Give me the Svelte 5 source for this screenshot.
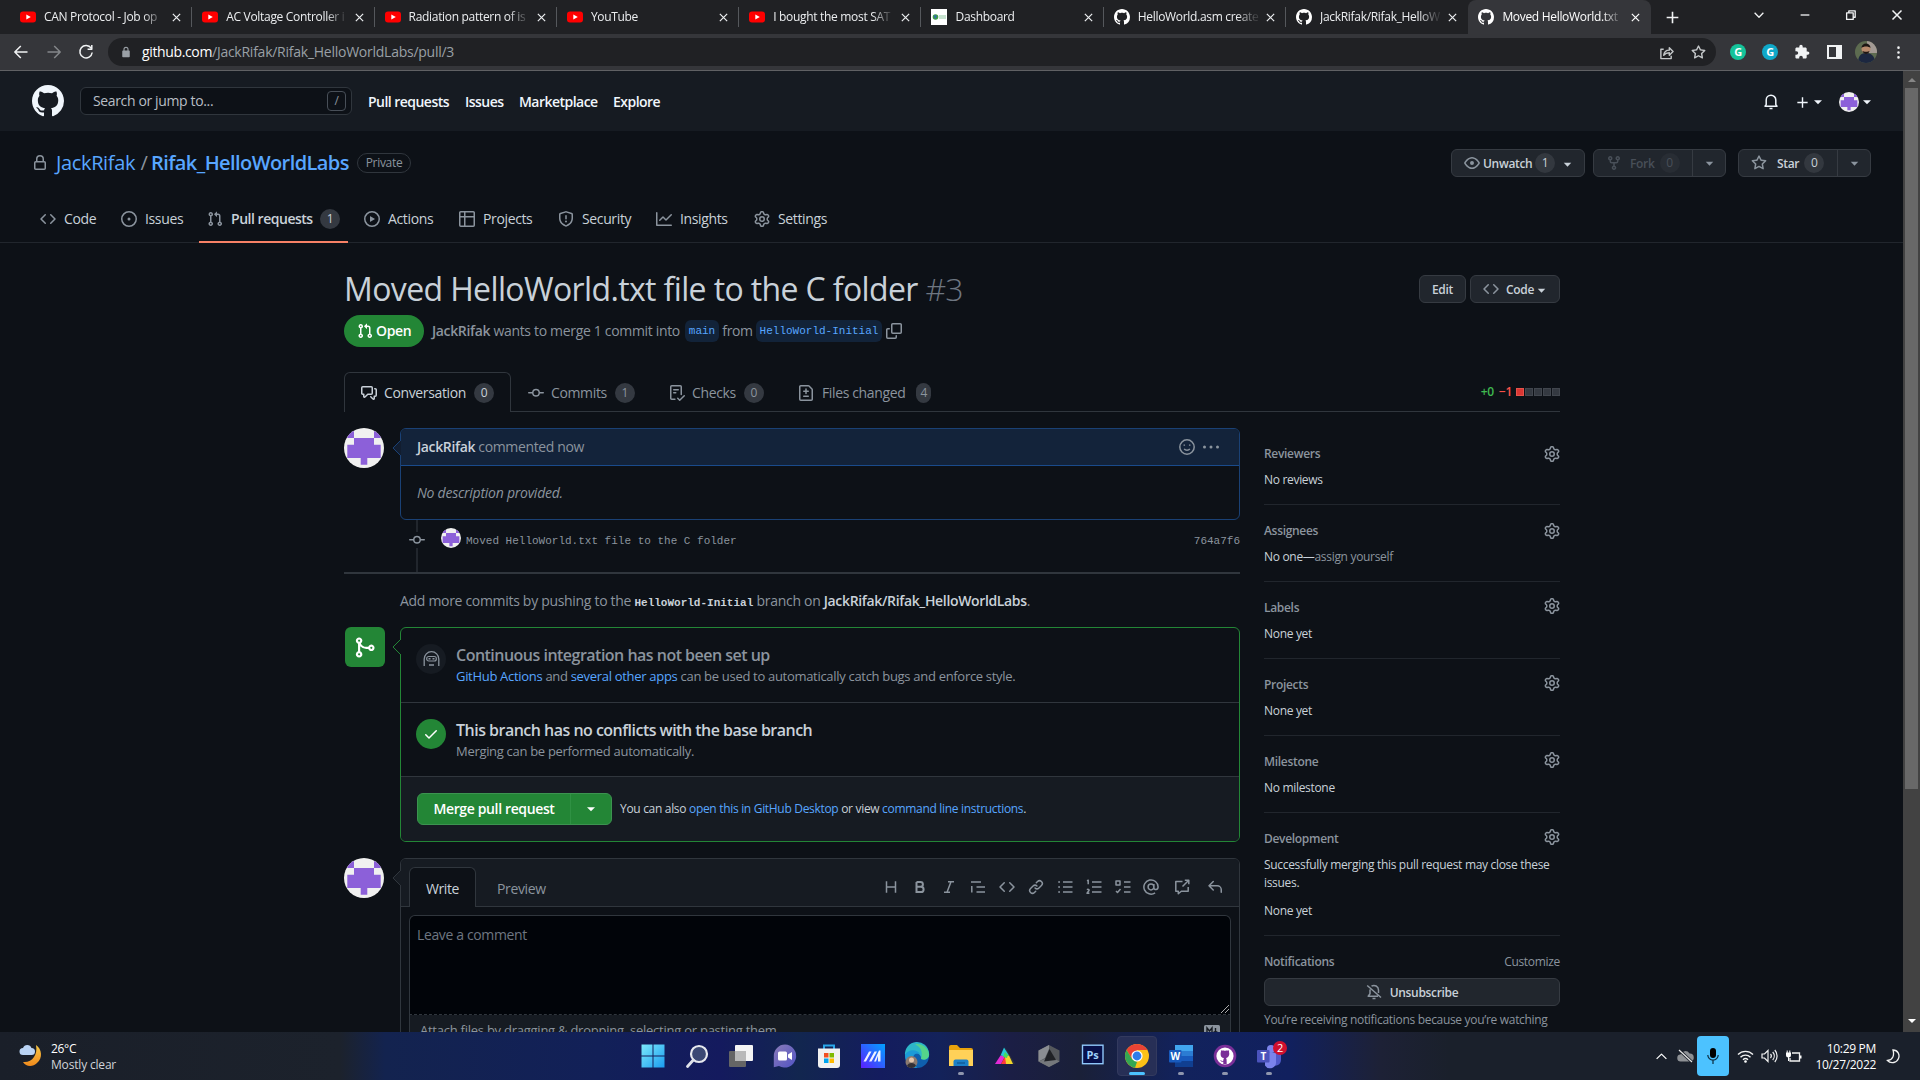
<script>
  const browserTabs = [
    { kind: 'yt', title: 'CAN Protocol - Job op' },
    { kind: 'yt', title: 'AC Voltage Controller i' },
    { kind: 'yt', title: 'Radiation pattern of is' },
    { kind: 'yt', title: 'YouTube' },
    { kind: 'yt', title: 'I bought the most SAT' },
    { kind: 'dash', title: 'Dashboard' },
    { kind: 'gh', title: 'HelloWorld.asm create' },
    { kind: 'gh', title: 'JackRifak/Rifak_HelloW' },
    { kind: 'gh', title: 'Moved HelloWorld.txt', active: true }
  ];
  const repoTabs = [
    { icon: 'code', label: 'Code' },
    { icon: 'issue', label: 'Issues' },
    { icon: 'pr', label: 'Pull requests', count: 1, active: true },
    { icon: 'play', label: 'Actions' },
    { icon: 'table', label: 'Projects' },
    { icon: 'shield', label: 'Security' },
    { icon: 'graph', label: 'Insights' },
    { icon: 'gear', label: 'Settings' }
  ];
  const prTabs = [
    { icon: 'discussion', label: 'Conversation', count: 0, active: true },
    { icon: 'commit', label: 'Commits', count: 1 },
    { icon: 'checklist', label: 'Checks', count: 0 },
    { icon: 'filediff', label: 'Files changed', count: 4 }
  ];
  const sections = [
    { title: 'Reviewers', text: 'No reviews', low: true },
    { title: 'Assignees', text: 'No one—', link: 'assign yourself', low: true },
    { title: 'Labels', text: 'None yet' },
    { title: 'Projects', text: 'None yet' },
    { title: 'Milestone', text: 'No milestone' }
  ];
  const tools = ['heading', 'bold', 'italic', 'quote', 'code', 'link', 'ul', 'ol', 'tasks', 'mention', 'crossref', 'reply'];
  const apps = [
    { id: 'start' }, { id: 'search' }, { id: 'views' }, { id: 'chat' }, { id: 'store' }, { id: 'asus' }, { id: 'edge' },
    { id: 'folder', open: true }, { id: 'prism' }, { id: 'cube' }, { id: 'ps' }, { id: 'chrome', focus: true },
    { id: 'word', open: true }, { id: 'github', open: true }, { id: 'teams', open: true }
  ];

  const fills = {
    github: 'M8 0C3.58 0 0 3.58 0 8c0 3.54 2.29 6.53 5.47 7.59.4.07.55-.17.55-.38 0-.19-.01-.82-.01-1.49-2.01.37-2.53-.49-2.69-.94-.09-.23-.48-.94-.82-1.13-.28-.15-.68-.52-.01-.53.63-.01 1.08.58 1.23.82.72 1.21 1.87.87 2.33.66.07-.52.28-.87.51-1.07-1.78-.2-3.64-.89-3.64-3.95 0-.87.31-1.59.82-2.15-.08-.2-.36-1.02.08-2.12 0 0 .67-.21 2.2.82.64-.18 1.32-.27 2-.27.68 0 1.36.09 2 .27 1.53-1.04 2.2-.82 2.2-.82.44 1.1.16 1.92.08 2.12.51.56.82 1.27.82 2.15 0 3.07-1.87 3.75-3.65 3.95.29.25.54.73.54 1.48 0 1.07-.01 1.93-.01 2.2 0 .21.15.46.55.38A8.013 8.013 0 0016 8c0-4.42-3.58-8-8-8z',
    code: 'M4.72 3.22a.75.75 0 011.06 1.06L2.06 8l3.72 3.72a.75.75 0 11-1.06 1.06L.47 8.53a.75.75 0 010-1.06l4.25-4.25zm6.56 0a.75.75 0 10-1.06 1.06L13.94 8l-3.72 3.72a.75.75 0 101.06 1.06l4.25-4.25a.75.75 0 000-1.06l-4.25-4.25z',
    issue: 'M8 9.5a1.5 1.5 0 100-3 1.5 1.5 0 000 3zM8 0a8 8 0 100 16A8 8 0 008 0zM1.5 8a6.5 6.5 0 1113 0 6.5 6.5 0 01-13 0z',
    pr: 'M7.177 3.073L9.573.677A.25.25 0 0110 .854v4.792a.25.25 0 01-.427.177L7.177 3.427a.25.25 0 010-.354zM3.75 2.5a.75.75 0 100 1.5.75.75 0 000-1.5zm-2.25.75a2.25 2.25 0 113 2.122v5.256a2.251 2.251 0 11-1.5 0V5.372A2.25 2.25 0 011.5 3.25zM11 2.5h-1V4h1a1 1 0 011 1v5.628a2.251 2.251 0 101.5 0V5A2.5 2.5 0 0011 2.5zm1 10.25a.75.75 0 111.5 0 .75.75 0 01-1.5 0zM3.75 12a.75.75 0 100 1.5.75.75 0 000-1.5z',
    play: 'M1.5 8a6.5 6.5 0 1113 0 6.5 6.5 0 01-13 0zM8 0a8 8 0 100 16A8 8 0 008 0zM6.379 5.227A.25.25 0 006 5.442v5.117a.25.25 0 00.379.214l4.264-2.559a.25.25 0 000-.428L6.379 5.227z',
    table: 'M0 1.75C0 .784.784 0 1.75 0h12.5C15.216 0 16 .784 16 1.75v12.5A1.75 1.75 0 0114.25 16H1.75A1.75 1.75 0 010 14.25V1.75zM1.5 6.5v7.75c0 .138.112.25.25.25H5v-8H1.5zM5 5H1.5V1.75a.25.25 0 01.25-.25H5V5zm1.5 1.5v8h7.75a.25.25 0 00.25-.25V6.5h-8zM14.5 5h-8V1.5h7.75a.25.25 0 01.25.25V5z',
    shield: 'M7.467.133a1.75 1.75 0 011.066 0l5.25 1.68A1.75 1.75 0 0115 3.48V7c0 1.566-.32 3.182-1.303 4.682-.983 1.498-2.585 2.813-5.032 3.855a1.7 1.7 0 01-1.33 0c-2.447-1.042-4.049-2.357-5.032-3.855C1.32 10.182 1 8.566 1 7V3.48a1.75 1.75 0 011.217-1.667l5.25-1.68zm.61 1.429a.25.25 0 00-.153 0l-5.25 1.68a.25.25 0 00-.174.238V7c0 1.358.275 2.666 1.057 3.86.784 1.194 2.121 2.34 4.366 3.297a.2.2 0 00.154 0c2.245-.956 3.582-2.104 4.366-3.298C13.225 9.666 13.5 8.36 13.5 7V3.48a.25.25 0 00-.174-.237l-5.25-1.68zM9 10.5a1 1 0 11-2 0 1 1 0 012 0zm-.25-5.75a.75.75 0 10-1.5 0v3a.75.75 0 001.5 0v-3z',
    graph: 'M1.5 1.75a.75.75 0 00-1.5 0v12.5c0 .414.336.75.75.75h14.5a.75.75 0 000-1.5H1.5V1.75zm14.28 2.53a.75.75 0 00-1.06-1.06L10 7.94 7.53 5.47a.75.75 0 00-1.06 0L3.22 8.72a.75.75 0 001.06 1.06L7 7.06l2.47 2.47a.75.75 0 001.06 0l5.25-5.25z',
    gear: 'M7.429 1.525a6.593 6.593 0 011.142 0c.036.003.108.036.137.146l.289 1.105c.147.56.55.967.997 1.189.174.086.341.183.501.29.417.278.97.423 1.53.27l1.102-.303c.11-.03.175.016.195.046.219.31.41.641.573.989.014.031.022.11-.059.19l-.815.806c-.411.406-.562.957-.53 1.456a4.588 4.588 0 010 .582c-.032.499.119 1.05.53 1.456l.815.806c.08.08.073.159.059.19a6.494 6.494 0 01-.573.99c-.02.029-.086.074-.195.045l-1.103-.303c-.559-.153-1.112-.008-1.529.27-.16.107-.327.204-.5.29-.449.222-.851.628-.998 1.189l-.289 1.105c-.029.11-.101.143-.137.146a6.613 6.613 0 01-1.142 0c-.036-.003-.108-.037-.137-.146l-.289-1.105c-.147-.56-.55-.967-.997-1.189a4.502 4.502 0 01-.501-.29c-.417-.278-.97-.423-1.53-.27l-1.102.303c-.11.03-.175-.016-.195-.046a6.492 6.492 0 01-.573-.989c-.014-.031-.022-.11.059-.19l.815-.806c.411-.406.562-.957.53-1.456a4.587 4.587 0 010-.582c.032-.499-.119-1.05-.53-1.456l-.815-.806c-.08-.08-.073-.159-.059-.19a6.44 6.44 0 01.573-.99c.02-.029.086-.075.195-.045l1.103.303c.559.153 1.112.008 1.529-.27.16-.107.327-.204.5-.29.449-.222.851-.628.998-1.189l.289-1.105c.029-.11.101-.143.137-.146zM8 0c-.236 0-.47.01-.701.03-.743.065-1.29.615-1.458 1.261l-.29 1.106c-.017.066-.078.158-.211.224a5.994 5.994 0 00-.668.386c-.123.082-.233.09-.3.071L3.27 2.776c-.644-.177-1.392.02-1.82.63a7.977 7.977 0 00-.704 1.217c-.315.675-.111 1.422.363 1.891l.815.806c.05.048.098.147.088.294a6.084 6.084 0 000 .772c.01.147-.038.246-.088.294l-.815.806c-.474.469-.678 1.216-.363 1.891.2.428.436.835.704 1.218.428.609 1.176.806 1.82.63l1.103-.303c.066-.019.176-.011.299.071.213.143.436.272.668.386.133.066.194.158.212.224l.289 1.106c.169.646.715 1.196 1.458 1.26a8.094 8.094 0 001.402 0c.743-.064 1.29-.614 1.458-1.26l.29-1.106c.017-.066.078-.158.211-.224a5.98 5.98 0 00.668-.386c.123-.082.233-.09.3-.071l1.102.302c.644.177 1.392-.02 1.82-.63.268-.382.505-.789.704-1.217.315-.675.111-1.422-.364-1.891l-.814-.806c-.05-.048-.098-.147-.088-.294a6.1 6.1 0 000-.772c-.01-.147.039-.246.088-.294l.814-.806c.475-.469.679-1.216.364-1.891a7.992 7.992 0 00-.704-1.218c-.428-.609-1.176-.806-1.82-.63l-1.103.303c-.066.019-.176.011-.299-.071a5.991 5.991 0 00-.668-.386c-.133-.066-.194-.158-.212-.224L10.16 1.29C9.99.645 9.444.095 8.701.031A8.094 8.094 0 008 0zm1.5 8a1.5 1.5 0 11-3 0 1.5 1.5 0 013 0zM11 8a3 3 0 11-6 0 3 3 0 016 0z',
    lock: 'M4 4v2h-.25A1.75 1.75 0 002 7.75v5.5c0 .966.784 1.75 1.75 1.75h8.5A1.75 1.75 0 0014 13.25v-5.5A1.75 1.75 0 0012.25 6H12V4a4 4 0 10-8 0zm6.5 2V4a2.5 2.5 0 10-5 0v2h5zM12 7.5h.25a.25.25 0 01.25.25v5.5a.25.25 0 01-.25.25h-8.5a.25.25 0 01-.25-.25v-5.5a.25.25 0 01.25-.25H12z',
    eye: 'M1.679 7.932c.412-.621 1.242-1.75 2.366-2.717C5.175 4.242 6.527 3.5 8 3.5c1.473 0 2.824.742 3.955 1.715 1.124.967 1.954 2.096 2.366 2.717a.119.119 0 010 .136c-.412.621-1.242 1.75-2.366 2.717C10.825 11.758 9.473 12.5 8 12.5c-1.473 0-2.824-.742-3.955-1.715C2.92 9.818 2.09 8.69 1.679 8.068a.119.119 0 010-.136zM8 2c-1.981 0-3.67.992-4.933 2.078C1.797 5.169.88 6.423.43 7.1a1.619 1.619 0 000 1.798c.45.678 1.367 1.932 2.637 3.024C4.329 13.008 6.019 14 8 14c1.981 0 3.67-.992 4.933-2.078 1.27-1.091 2.187-2.345 2.637-3.023a1.619 1.619 0 000-1.798c-.45-.678-1.367-1.932-2.637-3.023C11.671 2.992 9.981 2 8 2zm0 8a2 2 0 100-4 2 2 0 000 4z',
    fork: 'M5 3.25a.75.75 0 11-1.5 0 .75.75 0 011.5 0zm0 2.122a2.25 2.25 0 10-1.5 0v.878A2.25 2.25 0 005.75 8.5h1.5v2.128a2.251 2.251 0 101.5 0V8.5h1.5a2.25 2.25 0 002.25-2.25v-.878a2.25 2.25 0 10-1.5 0v.878a.75.75 0 01-.75.75h-4.5A.75.75 0 015 6.25v-.878zm3.75 7.378a.75.75 0 11-1.5 0 .75.75 0 011.5 0zm3-8.75a.75.75 0 100-1.5.75.75 0 000 1.5z',
    star: 'M8 .25a.75.75 0 01.673.418l1.882 3.815 4.21.612a.75.75 0 01.416 1.279l-3.046 2.97.719 4.192a.75.75 0 01-1.088.791L8 12.347l-3.766 1.98a.75.75 0 01-1.088-.79l.72-4.194L.818 6.374a.75.75 0 01.416-1.28l4.21-.611L7.327.668A.75.75 0 018 .25zm0 2.445L6.615 5.5a.75.75 0 01-.564.41l-3.097.45 2.24 2.184a.75.75 0 01.216.664l-.528 3.084 2.769-1.456a.75.75 0 01.698 0l2.77 1.456-.53-3.084a.75.75 0 01.216-.664l2.24-2.183-3.096-.45a.75.75 0 01-.564-.41L8 2.694v.001z',
    copy: 'M0 6.75C0 5.784.784 5 1.75 5h1.5a.75.75 0 010 1.5h-1.5a.25.25 0 00-.25.25v7.5c0 .138.112.25.25.25h7.5a.25.25 0 00.25-.25v-1.5a.75.75 0 011.5 0v1.5A1.75 1.75 0 019.25 16h-7.5A1.75 1.75 0 010 14.25v-7.5zM5 1.75C5 .784 5.784 0 6.75 0h7.5C15.216 0 16 .784 16 1.75v7.5A1.75 1.75 0 0114.25 11h-7.5A1.75 1.75 0 015 9.25v-7.5zm1.75-.25a.25.25 0 00-.25.25v7.5c0 .138.112.25.25.25h7.5a.25.25 0 00.25-.25v-7.5a.25.25 0 00-.25-.25h-7.5z',
    discussion: 'M1.5 2.75a.25.25 0 01.25-.25h8.5a.25.25 0 01.25.25v5.5a.25.25 0 01-.25.25h-3.5a.75.75 0 00-.53.22L3.5 11.44V9.25a.75.75 0 00-.75-.75h-1a.25.25 0 01-.25-.25v-5.5zM1.75 1A1.75 1.75 0 000 2.75v5.5C0 9.216.784 10 1.75 10H2v1.543a1.457 1.457 0 002.487 1.03L7.061 10h3.189A1.75 1.75 0 0012 8.25v-5.5A1.75 1.75 0 0010.25 1h-8.5zM14.5 4.75a.25.25 0 00-.25-.25h-.5a.75.75 0 110-1.5h.5c.966 0 1.75.784 1.75 1.75v5.5A1.75 1.75 0 0114.25 12H14v1.543a1.457 1.457 0 01-2.487 1.03L9.22 12.28a.75.75 0 111.06-1.06l2.22 2.22v-2.19a.75.75 0 01.75-.75h1a.25.25 0 00.25-.25v-5.5z',
    commit: 'M10.5 7.75a2.5 2.5 0 11-5 0 2.5 2.5 0 015 0zm1.43.75a4.002 4.002 0 01-7.86 0H.75a.75.75 0 110-1.5h3.32a4.001 4.001 0 017.86 0h3.32a.75.75 0 110 1.5h-3.32z',
    checklist: 'M2.5 1.75a.25.25 0 01.25-.25h8.5a.25.25 0 01.25.25v7.736a.75.75 0 101.5 0V1.75A1.75 1.75 0 0011.25 0h-8.5A1.75 1.75 0 001 1.75v11.5c0 .966.784 1.75 1.75 1.75h3.17a.75.75 0 000-1.5H2.75a.25.25 0 01-.25-.25V1.75zM4.75 4a.75.75 0 000 1.5h4.5a.75.75 0 000-1.5h-4.5zM4 7.75A.75.75 0 014.75 7h2a.75.75 0 010 1.5h-2A.75.75 0 014 7.75zm11.774 3.537a.75.75 0 00-1.048-1.074L10.7 14.145 9.281 12.72a.75.75 0 00-1.062 1.058l1.943 1.95a.75.75 0 001.055.008l4.557-4.45z',
    filediff: 'M2.75 1.5a.25.25 0 00-.25.25v12.5c0 .138.112.25.25.25h10.5a.25.25 0 00.25-.25V4.664a.25.25 0 00-.073-.177l-2.914-2.914a.25.25 0 00-.177-.073H2.75zM1 1.75C1 .784 1.784 0 2.75 0h7.586c.464 0 .909.184 1.237.513l2.914 2.914c.329.328.513.773.513 1.237v9.586A1.75 1.75 0 0113.25 16H2.75A1.75 1.75 0 011 14.25V1.75zm7 1.5a.75.75 0 01.75.75v1.5h1.5a.75.75 0 010 1.5h-1.5v1.5a.75.75 0 01-1.5 0V7h-1.5a.75.75 0 010-1.5h1.5V4A.75.75 0 018 3.25zm-3 8a.75.75 0 01.75-.75h4.5a.75.75 0 010 1.5h-4.5a.75.75 0 01-.75-.75z',
    merge: 'M5 3.254V3.25v.005a.75.75 0 110-.005v.004zm.45 1.9a2.25 2.25 0 10-1.95.218v5.256a2.25 2.25 0 101.5 0V7.123A5.735 5.735 0 009.25 9h1.378a2.251 2.251 0 100-1.5H9.25a4.25 4.25 0 01-3.8-2.346zM12.75 9a.75.75 0 100-1.5.75.75 0 000 1.5zm-8.5 4.5a.75.75 0 100-1.5.75.75 0 000 1.5z',
    check: 'M13.78 4.22a.75.75 0 010 1.06l-7.25 7.25a.75.75 0 01-1.06 0L2.22 9.28a.75.75 0 011.06-1.06L6 10.94l6.72-6.72a.75.75 0 011.06 0z',
    link: 'M7.775 3.275a.75.75 0 001.06 1.06l1.25-1.25a2 2 0 112.83 2.83l-2.5 2.5a2 2 0 01-2.83 0 .75.75 0 00-1.06 1.06 3.5 3.5 0 004.95 0l2.5-2.5a3.5 3.5 0 00-4.95-4.95l-1.25 1.25zm-4.69 9.64a2 2 0 010-2.83l2.5-2.5a2 2 0 012.83 0 .75.75 0 001.06-1.06 3.5 3.5 0 00-4.95 0l-2.5 2.5a3.5 3.5 0 004.95 4.95l1.25-1.25a.75.75 0 00-1.06-1.06l-1.25 1.25a2 2 0 01-2.83 0z',
    reply: 'M6.78 1.97a.75.75 0 010 1.06L3.81 6h6.44A4.75 4.75 0 0115 10.75v2.5a.75.75 0 01-1.5 0v-2.5a3.25 3.25 0 00-3.25-3.25H3.81l2.97 2.97a.75.75 0 11-1.06 1.06L1.47 7.28a.75.75 0 010-1.06l4.25-4.25a.75.75 0 011.06 0z',
    caret: 'M4 6.2h8L8 10.300z',
    kebab: 'M8 3.6a1.6 1.6 0 100-3.2 1.6 1.6 0 000 3.2zm0 6a1.6 1.6 0 100-3.2 1.6 1.6 0 000 3.2zm0 6a1.6 1.6 0 100-3.2 1.6 1.6 0 000 3.2z',
    dots: 'M1.500 9.5a1.5 1.5 0 100-3 1.5 1.5 0 000 3zm6.500 0a1.5 1.5 0 100-3 1.5 1.5 0 000 3zm6.500 0a1.5 1.5 0 100-3 1.5 1.5 0 000 3z',
    padlock: 'M8 1a3.4 3.4 0 00-3.4 3.4V6H4a1 1 0 00-1 1v7a1 1 0 001 1h8a1 1 0 001-1V7a1 1 0 00-1-1h-.6V4.400A3.400 3.400 0 008 1zm0 1.500a1.900 1.900 0 011.900 1.900V6H6.100V4.400A1.900 1.900 0 018 2.500z',
    puzzle: 'M13.700 7.400h-1V4.700c0-.7-.6-1.300-1.300-1.300H8.700v-1a1.700 1.700 0 00-3.400 0v1H2.700c-.7 0-1.300.6-1.300 1.300v2.500h1a1.800 1.800 0 010 3.600h-1v2.500c0 .7.6 1.300 1.300 1.300h2.500v-1a1.800 1.800 0 013.600 0v1h2.600c.7 0 1.300-.6 1.300-1.300v-2.500h1a1.700 1.700 0 000-3.400z'
  };
  const strokes = {
    bell: 'M3.2 10.600L2 12.200h12l-1.200-1.600V6a4.800 4.800 0 00-9.600 0zM6.500 14.600h3',
    bellslash: 'M4 5.500V9.800L2.200 12.200H12M5.500 2.200a4.500 4.500 0 017 3.800v3M1.200 1.500l13.800 12M6.500 14.600h3',
    plus: 'M8 2.500v11M2.500 8h11',
    smiley: 'M8 .8a7.200 7.200 0 100 14.400A7.200 7.200 0 008 .8zM5.200 9.800c1.200 1.800 4.400 1.800 5.600 0M5.300 5.500v1.300M10.700 5.500v1.300',
    heading: 'M3.500 2.200v11.600M12.500 2.200v11.600M3.500 8h9',
    italic: 'M7 2.700h6M3 13.300h6M10 2.700L6 13.300',
    quote: 'M1 3h10M6.500 8h8.500M6.500 13h8.500M1.800 7v6.500',
    ul: 'M6 3h9.500M6 8h9.500M6 13h9.500M1.200 3h1.800M1.200 8h1.800M1.200 13h1.800',
    ol: 'M6 3h9.500M6 8h9.500M6 13h9.500M1 1.800l1.200-.6v4M1 10.800c.8-.8 2.400-.4 2 .7L1 14.200h2.400',
    tasks: 'M1 2h4v4H1zM9 3h6.500M9 8h6.500M9 13h6.500M1 12l1.500 1.500L5.500 10',
    mention: 'M10.900 8a2.900 2.900 0 11-5.800 0 2.900 2.900 0 015.800 0zM10.900 5v3.700c0 2.500 4.200 2.400 4.200-.7a7.100 7.100 0 10-3 5.800',
    crossref: 'M8.500 2.500H1.800v9.700h2.500v2.600l3-2.600h6.900V8M8.500 7.500l6-6M10.800 1.200h4v4',
    back: 'M14.500 8H2M7.800 2L1.800 8l6 6',
    forward: 'M1.500 8H14M8.200 2l6 6-6 6',
    reload: 'M13.200 4.200A6.200 6.200 0 1014.200 8.500M13.800 1v4.200H9.600',
    close: 'M3.500 3.500l9 9M12.500 3.500l-9 9',
    chevdown: 'M3 5.500l5 5 5-5',
    chevup: 'M2 11l6-6 6 6',
    min: 'M3 8h10',
    restore: 'M3 5.500h7.500V13H3zM5.500 5.500V3.300h7.300v7.300h-2.300',
    share: 'M5 4.500H2v10h11v-3M5 11c.5-4 3-5.500 6-5.500V3l4 4-4 4V8.300c-2.500 0-4.500.8-6 2.700z'
  };
</script>

{#snippet icon(name, size = 16)}
  <svg class="icon" width={size} height={size} viewBox="0 0 16 16">
    {#if fills[name]}
      <path fill="currentColor" fill-rule="evenodd" d={fills[name]} />
    {:else if name === 'bold'}
      <path fill="none" stroke="currentColor" stroke-width="2" d="M4.500 3v10h4.500a2.600 2.600 0 000-5.200H4.500M4.500 3h4a2.400 2.400 0 010 4.800" />
    {:else}
      <path fill="none" stroke="currentColor" stroke-width="1.5" stroke-linejoin="round" d={strokes[name]} />
    {/if}
  </svg>
{/snippet}

{#snippet identicon(size)}
  <svg class="identicon" width={size} height={size} viewBox="0 0 40 40">
    <rect width="40" height="40" fill="#f0f0f0" />
    <path fill="#8c60d9" d="M3.300 3.300h6.700v6.700H3.300zM30 3.300h6.700v6.700H30zM10 10h20v6.700h6.700V30H23.300v6.700h-6.600V30H3.300V16.700H10z" />
  </svg>
{/snippet}

{#snippet app(id)}
  <svg class="appicon" width="24" height="24" viewBox="0 0 24 24">
    {#if id === 'start'}
      <path fill="url(#win)" d="M.5.500h11v11H.5zM12.500.500h11v11h-11zM.5 12.500h11v11H.5zM12.500 12.500h11v11h-11z" />
    {:else if id === 'search'}
      <circle cx="14" cy="10" r="8" fill="#3b4874" stroke="#e6e8ee" stroke-width="2.200" /><path d="M8.300 16L2.500 22.500" stroke="#dfe2ea" stroke-width="2.800" stroke-linecap="round" />
    {:else if id === 'views'}
      <rect x="6" y="1" width="18" height="16" rx="1" fill="#f4f4f4" /><rect x="0" y="7" width="17" height="16" rx="1" fill="#656565" /><path d="M6 7h11v10H6z" fill="#b9b9b9" />
    {:else if id === 'chat'}
      <path d="M12 .5A11.500 11.500 0 11 6 22L.8 23.300V12A11.300 11.300 0 0112 .5z" fill="url(#chatg)" /><rect x="5" y="7.500" width="9" height="9" rx="1.500" fill="#fff" /><path d="M15 10.500l4-2.500v8l-4-2.500z" fill="#fff" />
    {:else if id === 'store'}
      <path d="M7 5V1.500h10V5" fill="none" stroke="#2aa7ea" stroke-width="2" /><path d="M1 4.500h22V21a3 3 0 01-3 3H4a3 3 0 01-3-3z" fill="#f1f1f1" /><path d="M7 9h4.500v4.500H7z" fill="#f25022" /><path d="M12.500 9H17v4.500h-4.500z" fill="#7fba00" /><path d="M7 14.500h4.500V19H7z" fill="#00a4ef" /><path d="M12.500 14.500H17V19h-4.500z" fill="#ffb900" />
    {:else if id === 'asus'}
      <rect width="24" height="24" fill="url(#asusg)" /><path d="M2.500 17.500L8 7.500h2.500L5 17.500zM8 17.500l5.500-10H16l-5.500 10zM13 17.500l5-11h1.500v11H17v-5.500l-2 5.500z" fill="#fff" opacity=".92" />
    {:else if id === 'edge'}
      <circle cx="12" cy="12" r="12" fill="#0f5fae" /><path d="M0 11A12 12 0 0124 9c1 5-3 8-8 6 1-4-5-10-16-4z" fill="#2db6c8" /><path d="M10 .2A12 12 0 0124 10.500c0 4-4 6-8 4.500C18 8 16 3 10 .2z" fill="#55d48a" /><path d="M0 11C3 5 12 5 15 10c-5-2-8 2-7 7l4 7C5 24 0 19 0 11z" fill="#1c9bd8" /><circle cx="6.500" cy="18" r="6" fill="#8b7a70" /><circle cx="6.500" cy="16" r="2.500" fill="#e3c5ab" /><path d="M2 22c1-4 8-4 9 0a6 6 0 01-9 0z" fill="#332f35" />
    {:else if id === 'folder'}
      <path d="M0 3a2 2 0 012-2h6l3 3h11a2 2 0 012 2v4H0z" fill="#e8a20c" /><path d="M0 6h24v16H0z" fill="#ffd158" /><path d="M4.500 22v-4.500a2 2 0 012-2h11a2 2 0 012 2V22z" fill="#1c7fc8" /><path d="M8 19h8" stroke="#125d9a" stroke-width="1.500" />
    {:else if id === 'prism'}
      <path d="M12 3l10 17-6-1z" fill="#30333e" /><path d="M11 3.500L7.500 11.500l4.500 1 4-1z" fill="#25c9d8" /><path d="M7.500 11.500L2 20h6l4-7.500z" fill="#e12bd6" /><path d="M12 12.500L8 20h5l2-5z" fill="#ff3b3b" /><path d="M16 11.500L12 12.500l1 7.500h7z" fill="#f3d72c" /><path d="M12 8l-2 5 4 1 1-3z" fill="#45db5c" />
    {:else if id === 'cube'}
      <path d="M12 1l10.500 5.500v11L12 23 1.500 17.500v-11z" fill="#55585c" /><path d="M12 1L1.500 6.500v11L8 14l4-9z" fill="#8b8e92" /><path d="M1.500 17.500L12 23l10.500-5.500L18 15H8z" fill="#75787c" /><path d="M12.500 5l6.500 11-12 1.500z" fill="#202226" />
    {:else if id === 'ps'}
      <rect x="1.500" y="1.200" width="20.500" height="18.500" fill="#07104a" stroke="#8fc8fa" stroke-width="1.400" /><text x="11.500" y="14.500" text-anchor="middle" class="glyph" font-size="11" fill="#9fd0fb">Ps</text>
    {:else if id === 'chrome'}
      <circle cx="12" cy="12" r="12" fill="#fbc116" /><path d="M1.600 6A12 12 0 0122.400 6H12v6l-5 3z" fill="#ea4335" /><path d="M1.600 6L7 15l5 3-2 5.800A12 12 0 011.600 6z" fill="#34a853" /><circle cx="12" cy="12" r="5.600" fill="#fff" /><circle cx="12" cy="12" r="4.400" fill="#2f7de9" />
    {:else if id === 'word'}
      <rect x="6" y="1" width="18" height="22" rx="1.500" fill="#2b7cd3" /><path d="M6 1h18v6H6z" fill="#41a5ee" /><path d="M6 17h18v6H6z" fill="#103f91" /><path d="M6 12h18v5H6z" fill="#185abd" /><rect x="0" y="6" width="12.500" height="12.500" rx="1" fill="#185abd" /><text x="6.200" y="15.800" text-anchor="middle" class="glyph" font-size="10" fill="#fff">W</text>
    {:else if id === 'github'}
      <circle cx="12" cy="12" r="11.300" fill="#7a2f98" /><circle cx="12" cy="12" r="8.600" fill="#fff" /><g transform="translate(3.500 3.500) scale(1.060)"><path d="M8 3.200c2.800-1.200 4.500.800 4 3.500-.3 2.500-1.800 3-3 3.200.6.800.6 2 .6 5.600H6.400v-2c-2 .3-2.200-1-3-1.500 1-.4 1.600 1 3 .6.100-1.200.2-2 .6-2.700C5 9.700 4 8.600 3.900 6.500 3.700 3.900 5 2 8 3.200z" fill="#7a2f98" /><path d="M4.200 5.500V2.600l2.500 1zM11.800 5.500V2.600l-2.500 1z" fill="#7a2f98" /></g>
    {:else}
      <circle cx="14" cy="5" r="4" fill="#7b83eb" /><path d="M14 9h10v7a6 6 0 01-9 5z" fill="#5059c9" /><path d="M8 8.500h11v9a6 6 0 01-11 4z" fill="#7b83eb" /><rect x="0" y="6" width="12.500" height="12.500" rx="1" fill="#4b53bc" /><text x="6.200" y="15.800" text-anchor="middle" class="glyph" font-size="10" fill="#fff">T</text>
    {/if}
  </svg>
{/snippet}

<svg class="defs" width="0" height="0">
  <defs>
    <linearGradient id="win" x2="1" y2="1"><stop stop-color="#7ce9fb" /><stop offset="1" stop-color="#1a9cf0" /></linearGradient>
    <linearGradient id="chatg" x2="1" y2="1"><stop stop-color="#8a7bb8" /><stop offset="1" stop-color="#5153c4" /></linearGradient>
    <linearGradient id="asusg" x1="1" x2="0" y2="1"><stop stop-color="#00a2ff" /><stop offset="1" stop-color="#5b1fff" /></linearGradient>
    <linearGradient id="moong" x2="0" y2="1"><stop stop-color="#f7c948" /><stop offset="1" stop-color="#f08a1c" /></linearGradient>
  </defs>
</svg>

<div class="desktop">
  <div class="strip">
    <div class="tabs">
      {#each browserTabs as t, i}
        <div class={['tab', t.active && 'active', i === 7 && 'last']}>
          <span class="fav">
            {#if t.kind === 'yt'}
              <svg width="16" height="16" viewBox="0 0 16 16"><rect y="2.500" width="16" height="11" rx="3" fill="#f00" /><path d="M6.300 5.500l4.500 2.500-4.500 2.500z" fill="#fff" /></svg>
            {:else if t.kind === 'dash'}
              <svg width="16" height="16" viewBox="0 0 16 16"><rect width="16" height="16" fill="#fff" /><circle cx="4.500" cy="8" r="2.800" fill="#3c9a47" /><path d="M3 6l3 1-2 3z" fill="#3468b8" /><path d="M8 7h7M8 9h7" stroke="#8fc7a0" /></svg>
            {:else}
              {@render icon('github')}
            {/if}
          </span>
          <span class="tabtitle">{t.title}</span>
          {@render icon('close', 13)}
        </div>
      {/each}
    </div>
    <span class="newtab">{@render icon('plus', 17)}</span>
    <div class="winctl">
      <span>{@render icon('chevdown', 14)}</span><span>{@render icon('min', 14)}</span><span>{@render icon('restore', 14)}</span><span>{@render icon('close', 16)}</span>
    </div>
  </div>

  <div class="toolbar">
    <div class="navbtns"><span>{@render icon('back', 16)}</span><span class="dim">{@render icon('forward', 16)}</span><span>{@render icon('reload', 16)}</span></div>
    <div class="omni">
      <span class="pad">{@render icon('padlock', 12)}</span>
      <span class="url"><b>github.com</b>/JackRifak/Rifak_HelloWorldLabs/pull/3</span>
      <span class="ob">{@render icon('share', 15)}</span><span class="ob">{@render icon('star', 15)}</span>
    </div>
    <div class="ext">
      <span><i class="g green">G</i></span><span><i class="g blue">G</i></span>
      <span>{@render icon('puzzle', 16)}</span>
      <span><svg width="15" height="14" viewBox="0 0 15 14"><rect x="1" y="1" width="13" height="12" fill="none" stroke="#f1f3f4" stroke-width="2" /><path d="M9 1h5v12H9z" fill="#f1f3f4" /></svg></span>
      <span><svg class="identicon" width="22" height="22" viewBox="0 0 22 22"><rect width="22" height="22" fill="#5d6b50" /><rect x="12" width="10" height="12" fill="#a39a94" /><path d="M3 22c0-8 4-10 8-10s9 2 9 10z" fill="#1c2740" /><circle cx="11" cy="8" r="4.500" fill="#b88a6c" /><path d="M6.500 7c0-6 9-6 9 0-2-2-7-2-9 0zM7.500 10c1 4 6 4 7 0-1 1-6 1-7 0z" fill="#1c1614" /></svg></span>
      <span>{@render icon('kebab', 13)}</span>
    </div>
  </div>

  <div class="view">
    <div class="page">
      <header class="ghbar">
        <span class="logo">{@render icon('github', 32)}</span>
        <div class="search"><span>Search or jump to...</span><span class="key">/</span></div>
        <nav class="topnav"><span>Pull requests</span><span>Issues</span><span>Marketplace</span><span>Explore</span></nav>
        <div class="user">
          <span>{@render icon('bell', 16)}</span><span>{@render icon('plus', 15)}{@render icon('caret', 16)}</span><span>{@render identicon(20)}{@render icon('caret', 16)}</span>
        </div>
      </header>

      <section class="repo">
        <div class="reporow">
          {@render icon('lock')}
          <span class="owner">JackRifak</span><span class="slash">/</span><span class="rname">Rifak_HelloWorldLabs</span>
          <span class="pill">Private</span>
          <div class="actions">
            <div class="btn watch">{@render icon('eye')}<span>Unwatch</span><i class="cnt">1</i>{@render icon('caret', 15)}</div>
            <div class="btn split fork"><div class="off">{@render icon('fork')}<span>Fork</span><i class="cnt">0</i></div><div class="drop">{@render icon('caret', 15)}</div></div>
            <div class="btn split starb"><div>{@render icon('star')}<span>Star</span><i class="cnt">0</i></div><div class="drop">{@render icon('caret', 15)}</div></div>
          </div>
        </div>
        <nav class="repotabs">
          {#each repoTabs as t}
            <div class={['rt', t.active && 'sel']}>{@render icon(t.icon)}<span>{t.label}</span>{#if t.count}<i class="badge">{t.count}</i>{/if}</div>
          {/each}
        </nav>
      </section>

      <main>
        <div class="titlerow">
          <h1>Moved HelloWorld.txt file to the C folder <span>#3</span></h1>
          <div class="btn edit"><span>Edit</span></div>
          <div class="btn codeb">{@render icon('code')}<span>Code</span>{@render icon('caret', 15)}</div>
        </div>
        <div class="meta">
          <span class="open">{@render icon('pr')}Open</span>
          <span class="who"><b>JackRifak</b> wants to merge 1 commit into</span>
          <code class="t1">main</code><span class="from">from</span><code class="t2">HelloWorld-Initial</code>
          {@render icon('copy')}
        </div>
        <div class="prtabs">
          {#each prTabs as t}
            <div class={['pt', t.active && 'sel']}>{@render icon(t.icon)}<span>{t.label}</span><i class="badge">{t.count}</i></div>
          {/each}
          <div class="stat"><b class="add">+0</b><b class="del">−1</b><i class="red"></i><i></i><i></i><i></i><i></i></div>
        </div>

        <div class="cols">
          <div class="left">
            <div class="item">
              {@render identicon(40)}
              <div class="box comment">
                <svg class="arrow" width="9" height="16" viewBox="0 0 9 16"><path d="M9 0L1 8l8 8" fill="#121d2f" stroke="#1a4175" /></svg>
                <div class="chead"><span><b>JackRifak</b> commented now</span><span class="cicons">{@render icon('smiley')}{@render icon('dots')}</span></div>
                <div class="cbody">No description provided.</div>
              </div>
            </div>
            <div class="timeline">
              <div class="rail"><i></i>{@render icon('commit')}<i></i></div>
              <div class="commit">{@render identicon(20)}<code>Moved HelloWorld.txt file to the C folder</code><code class="sha">764a7f6</code></div>
            </div>
            <p class="push">Add more commits by pushing to the <code>HelloWorld-Initial</code> branch on <b>JackRifak/Rifak_HelloWorldLabs</b>.</p>
            <div class="item">
              <div class="mergeicon">{@render icon('merge', 23)}</div>
              <div class="box mergebox">
                <svg class="arrow" width="9" height="16" viewBox="0 0 9 16"><path d="M9 0L1 8l8 8" fill="#0d1117" stroke="#238636" /></svg>
                <div class="mrow">
                  <span class="circ grey"><svg width="17" height="16" viewBox="0 0 17 16"><path d="M1.200 15V8a7.300 7.300 0 0114.600 0v7M6 14h5" fill="none" stroke="#8b949e" stroke-width="1.300" /><rect x="3.700" y="5.500" width="9.600" height="4.500" rx="2" fill="none" stroke="#8b949e" stroke-width="1.200" /><path d="M5.500 7.800h2M9.500 7.800h2" stroke="#8b949e" stroke-width="1.500" /></svg></span>
                  <div><h3 class="mut">Continuous integration has not been set up</h3><p><em>GitHub Actions</em> and <em>several other apps</em> can be used to automatically catch bugs and enforce style.</p></div>
                </div>
                <div class="mrow second">
                  <span class="circ">{@render icon('check')}</span>
                  <div><h3>This branch has no conflicts with the base branch</h3><p>Merging can be performed automatically.</p></div>
                </div>
                <div class="mfoot">
                  <div class="mbtn"><span>Merge pull request</span><i>{@render icon('caret')}</i></div>
                  <p>You can also <em>open this in GitHub Desktop</em> or view <em>command line instructions</em>.</p>
                </div>
              </div>
            </div>
            <div class="item form">
              {@render identicon(40)}
              <div class="box editor">
                <svg class="arrow" width="9" height="16" viewBox="0 0 9 16"><path d="M9 0L1 8l8 8" fill="#161b22" stroke="#30363d" /></svg>
                <div class="ehead">
                  <div class="wtab">Write</div><div class="ptab">Preview</div>
                  <div class="tools">{#each tools as t}<span>{@render icon(t)}</span>{/each}</div>
                </div>
                <div class="area">
                  <span>Leave a comment</span>
                  <svg class="grip" width="9" height="9" viewBox="0 0 9 9"><path d="M1 9l8-8M5 9l4-4" stroke="#aaa" /></svg>
                </div>
                <div class="attach"><span>Attach files by dragging &amp; dropping, selecting or pasting them.</span>
                  <svg width="16" height="12" viewBox="0 0 16 12"><rect width="16" height="12" rx="1.500" fill="#8b949e" /><path d="M3 9V3l2.500 3L8 3v6M11.500 3v5M9.700 6.500l1.800 2 1.800-2" fill="none" stroke="#161b22" stroke-width="1.400" /></svg>
                </div>
              </div>
            </div>
          </div>

          <aside>
            {#each sections as s}
              <div class="sec">
                <div class={['st', s.low && 'low']}><b>{s.title}</b>{@render icon('gear')}</div>
                <p>{s.text}{#if s.link}<span>{s.link}</span>{/if}</p>
              </div>
            {/each}
            <div class="sec dev">
              <div class="st"><b>Development</b>{@render icon('gear')}</div>
              <p>Successfully merging this pull request may close these issues.</p>
              <p class="none">None yet</p>
            </div>
            <div class="sec notif">
              <div class="st"><b>Notifications</b><span>Customize</span></div>
              <div class="btn unsub">{@render icon('bellslash')}<span>Unsubscribe</span></div>
              <p>You’re receiving notifications because you’re watching</p>
            </div>
          </aside>
        </div>
      </main>
    </div>
    <div class="scroll">
      <i class="up"></i><div class="thumb"></div><i class="down"></i>
    </div>
  </div>

  <footer class="taskbar">
    <div class="weather">
      <svg width="24" height="24" viewBox="0 0 24 24"><path d="M17 1c6 4 7 13 1 18-4 4-11 4-14-1 9 1 15-7 13-17z" fill="url(#moong)" /><path d="M4 11a3.500 3.500 0 010-7 4.500 4.500 0 018.500 0 3.500 3.500 0 010 7z" fill="#b9d3f4" /></svg>
      <div><span>26°C</span><span class="soft">Mostly clear</span></div>
    </div>
    <div class="apps">
      {#each apps as a}
        <div class={['app', a.focus && 'focus', a.open && 'running']}>{@render app(a.id)}{#if a.id === 'teams'}<i class="count">2</i>{/if}</div>
      {/each}
    </div>
    <div class="tray">
      <span class="tr">{@render icon('chevup', 13)}</span>
      <span class="tr"><svg width="17" height="14" viewBox="0 0 17 14"><path d="M4 12.500a3.500 3.500 0 01-.5-7 5 5 0 019-1 4 4 0 01.5 8z" fill="#8d9094" /><path d="M2 1l13 12" stroke="#1b202a" stroke-width="3" /><path d="M2 1l13 12" stroke="#e8e8e8" stroke-width="1.200" /></svg></span>
      <span class="mic"><svg width="14" height="18" viewBox="0 0 14 18"><rect x="4" y="1" width="6" height="10" rx="3" fill="#000" /><path d="M1.800 8a5.200 5.200 0 0010.400 0M7 13.500V17" fill="none" stroke="#0b2a3d" stroke-width="1.200" /></svg></span>
      <span class="tr"><svg width="17" height="13" viewBox="0 0 17 13"><path d="M1 4.500a10.500 10.500 0 0115 0M3.500 7.200a7 7 0 0110 0M6 9.700a3.600 3.600 0 015 0" fill="none" stroke="#f2f2f2" stroke-width="1.400" /><circle cx="8.500" cy="11.500" r="1.300" fill="#fff" /></svg></span>
      <span class="tr"><svg width="17" height="14" viewBox="0 0 17 14"><path d="M1 5h2.500L7 1.500v11L3.500 9H1zM9.500 5a3 3 0 010 4M11.700 3a6 6 0 010 8M13.800 1a9 9 0 010 12" fill="none" stroke="#f2f2f2" stroke-width="1.200" /></svg></span>
      <span class="tr"><svg width="17" height="13" viewBox="0 0 17 13"><path d="M7 3h7.500v8H5V8" fill="none" stroke="#f2f2f2" stroke-width="1.300" /><path d="M15 5.500h1.500v3H15zM1 2.500h5V5a2.500 2.500 0 01-5 0zM1.700.500h1v2h-1zM4.300.500h1v2h-1zM3 7h1v4H3z" fill="#fff" /></svg></span>
      <div class="clock"><span>10:29 PM</span><span>10/27/2022</span></div>
      <span class="moon"><svg width="14" height="15" viewBox="0 0 14 15"><path d="M7 1c5 0 7 5 5.500 8.500C11 13.500 5 15.500 1.500 11.500 7 11 8.500 6 7 1z" fill="none" stroke="#f2f2f2" stroke-width="1.300" /></svg></span>
    </div>
  </footer>
</div>

<style>
  :global(body) { margin: 0; background: #0d1117; overflow: hidden; }
  :where(.desktop, .desktop *) { box-sizing: border-box; letter-spacing: -0.026em; }
  .desktop { width: 1920px; height: 1080px; display: flex; flex-direction: column; overflow: hidden; font: 14px/20px "Open Sans", "Noto Sans", sans-serif; color: #c9d1d9; }
  .defs { position: absolute; }
  .icon, .identicon, .appicon { display: block; flex: none; }
  .identicon { border-radius: 50%; }
  .appicon { overflow: visible; }
  i { font-style: normal; }
  em { font-style: normal; color: #58a6ff; }
  b { font-weight: 600; }
  h1, h3, p { margin: 0; }
  code { font-family: "Liberation Mono", monospace; font-size: 11px; letter-spacing: 0; }
  .glyph { font-family: "Open Sans", sans-serif; font-weight: 700; }

  .strip { height: 34px; background: #202124; display: flex; color: #f1f3f4; }
  .tabs { display: flex; padding-left: 10px; width: 1651px; }
  .tab { width: 182.300px; height: 34px; flex: none; display: flex; align-items: center; padding: 0 9px 0 10px; position: relative; font-size: 12px; color: #eceef0; }
  .tab::after { content: ""; position: absolute; right: 0; top: 7px; width: 1px; height: 20px; background: #55585c; }
  .tab.active::after, .tab.last::after { display: none; }
  .tab.active { background: #35363a; border-radius: 8px 8px 0 0; color: #fff; }
  .fav { width: 16px; height: 16px; color: #fff; }
  .fav svg { display: block; }
  .tabtitle { width: 122px; margin: 0 5px 0 8px; line-height: 16px; white-space: nowrap; mask-image: linear-gradient(90deg, #000 82%, rgb(0 0 0 / 15%) 97%); }
  .newtab { width: 42px; height: 34px; display: flex; align-items: center; justify-content: center; }
  .winctl { margin-left: auto; display: flex; }
  .winctl span { width: 46px; height: 29px; display: flex; align-items: center; justify-content: center; }

  .toolbar { height: 37px; background: #35363a; border-bottom: 1px solid #606164; display: flex; align-items: center; color: #f1f3f4; }
  .navbtns { display: flex; width: 108px; padding-left: 5px; }
  .navbtns span { width: 32.500px; display: flex; justify-content: center; }
  .navbtns .dim { color: #84878a; }
  .omni { width: 1608px; height: 28px; border-radius: 14px; background: #202124; display: flex; align-items: center; }
  .pad { width: 34px; padding-left: 12px; color: #9aa0a6; }
  .url { flex: 1; color: #9aa0a6; letter-spacing: -0.018em; }
  .url b { font-weight: 400; color: #fff; }
  .ob { width: 32px; display: flex; justify-content: center; color: #c4c7c9; }
  .ob:last-child { margin-right: 2px; }
  .ext { display: flex; padding-left: 6px; }
  .ext span { width: 32px; display: flex; justify-content: center; align-items: center; }
  .g { width: 16px; height: 16px; border-radius: 50%; font: 700 11px/16px "Open Sans", sans-serif; text-align: center; color: #fff; }
  .green { background: #15c39a; }
  .blue { background: #0fa8c8; }

  .view { height: 961px; display: flex; overflow: hidden; }
  .page { width: 1903px; height: 961px; overflow: hidden; background: #0d1117; }
  .scroll { width: 17px; background: #424242; display: flex; flex-direction: column; align-items: center; }
  .thumb { width: 13px; height: 701px; background: #686868; }
  .up, .down { width: 0; height: 0; border: 4px solid transparent; }
  .up { border-bottom-color: #868686; margin: 3px 0 6px; }
  .down { border-top-color: #fff; margin-top: auto; margin-bottom: 5px; }

  .ghbar { height: 60px; background: #161b22; display: flex; align-items: center; padding-left: 32px; color: #f0f6fc; }
  .logo { width: 48px; }
  .search { width: 272px; height: 28px; border: 1px solid #30363d; border-radius: 6px; background: #0d1117; display: flex; align-items: center; justify-content: space-between; padding: 0 5px 0 12px; color: #b8bec5; }
  .key { width: 19px; height: 20px; border: 1px solid #484f58; border-radius: 4px; text-align: center; font-size: 12px; line-height: 18px; color: #8b949e; }
  .topnav { display: grid; grid-template-columns: 97px 54px 94px 60px; padding-left: 16px; font-weight: 600; padding-top: 2px; }
  .topnav span { letter-spacing: -0.038em; white-space: nowrap; }
  .user { margin-left: auto; display: flex; padding-top: 2px; margin-right: 28px; }
  .user span { display: flex; align-items: center; }
  .user span:nth-child(1) { width: 32px; }
  .user span:nth-child(2) { width: 44px; }

  .repo { height: 112px; border-bottom: 1px solid #21262d; padding: 16px 0 0 32px; }
  .reporow { height: 32px; display: flex; align-items: center; width: 1839px; color: #8b949e; }
  .owner, .rname, .slash { font-size: 20px; line-height: 30px; color: #58a6ff; }
  .owner { width: 81px; margin-left: 8px; letter-spacing: -0.018em; }
  .slash { width: 14px; text-align: center; color: #8b949e; }
  .rname { width: 206px; font-weight: 600; letter-spacing: -0.029em; }
  .pill { height: 20px; width: 54px; border: 1px solid #30363d; border-radius: 10px; font-size: 12px; line-height: 18px; text-align: center; }
  .actions { margin-left: auto; display: flex; }
  .btn { height: 28px; background: #21262d; border: 1px solid #363b42; border-radius: 6px; display: flex; align-items: center; font-size: 12px; font-weight: 600; color: #c9d1d9; }
  .btn .icon { color: #8b949e; }
  .btn span { padding-top: 1px; }
  .btn > div { display: flex; align-items: center; height: 26px; padding-left: 12px; }
  .cnt { height: 20px; min-width: 20px; border-radius: 10px; background: #33383f; text-align: center; font-weight: 400; line-height: 20px; }
  .watch { width: 134px; padding-left: 12px; }
  .watch span { width: 52px; margin-left: 3px; }
  .watch .cnt { margin-right: 5px; }
  .watch .icon:last-child { color: #c9d1d9; margin-top: 2px; }
  .split { width: 133px; justify-content: space-between; }
  .btn .drop { width: 33px; padding: 0; justify-content: center; border-left: 1px solid #363b42; }
  .fork { margin-left: 8px; }
  .fork span { margin: 0 5px 0 8px; color: #484f58; }
  .fork .off .icon, .fork .cnt { color: #484f58; }
  .fork .cnt { background: #282d34; }
  .starb { margin-left: 12px; }
  .starb span { margin: 0 5px 0 10px; }
  .repotabs { display: grid; grid-template-columns: 81px 86px 157px 95px 99px 98px 98px 100px; height: 48px; margin-top: 16px; }
  .rt { display: flex; align-items: center; gap: 8px; padding-left: 8px; height: 48px; letter-spacing: -0.02em; }
  .rt.sel { border-bottom: 2px solid #f78166; padding-top: 2px; width: 149px; font-weight: 600; }
  .rt .icon { color: #8b949e; }
  .rt.sel span { width: 81px; white-space: nowrap; letter-spacing: -0.034em; }
  .badge { width: 20px; height: 20px; border-radius: 10px; background: #343941; font-size: 12px; font-weight: 500; text-align: center; line-height: 20px; }

  main { width: 1216px; margin-left: 344px; padding-top: 32px; }
  .titlerow { display: flex; height: 28px; align-items: center; }
  h1 { flex: 1; font-weight: 400; font-size: 32px; line-height: 36px; letter-spacing: -0.0195em; white-space: nowrap; }
  h1 span { color: #6e7681; font-weight: 300; }
  .edit { width: 47px; justify-content: center; margin-right: 4px; }
  .codeb { width: 90px; padding-left: 12px; }
  .codeb span { margin: 0 0 0 7px; }
  .codeb .icon:last-child { color: #c9d1d9; margin-top: 2px; }
  .meta { margin-top: 12px; height: 32px; display: flex; align-items: center; color: #8b949e; }
  .open { width: 80px; height: 32px; border-radius: 16px; background: #238636; color: #fff; font-weight: 600; display: flex; align-items: center; padding-left: 13px; gap: 3px; }
  .who { width: 253px; padding-left: 8px; white-space: nowrap; letter-spacing: -0.023em; }
  .meta code { height: 22px; line-height: 22px; border-radius: 6px; background: #122339; color: #58a6ff; text-align: center; }
  .meta .t1 { width: 34px; margin-left: 8px; }
  .from { width: 37px; text-align: center; }
  .meta .t2 { width: 126px; margin-right: 4px; }
  .prtabs { margin-top: 25px; height: 40px; border-bottom: 1px solid #30363d; display: grid; grid-template-columns: 167px 141px 129px 150px 1fr; color: #8b949e; }
  .pt { display: flex; align-items: center; gap: 7px; padding-left: 17px; height: 40px; white-space: nowrap; padding-top: 2px; }
  .pt.sel { border: 1px solid #30363d; border-bottom: 0; border-radius: 6px 6px 0 0; background: #0d1117; color: #c9d1d9; padding-left: 16px; padding-top: 1px; }
  .pt .badge { margin-left: 1px; }
  .pt:nth-child(4) { gap: 8px; }
  .pt:nth-child(4) .badge { margin-left: 3px; }
  .stat { display: flex; align-items: center; justify-content: flex-end; font-size: 12px; }
  .stat i { width: 8px; height: 8px; margin-left: 1px; background: #343941; outline: 1px solid #41464e; outline-offset: -1px; }
  .stat .red { background: #da3633; outline-color: #e5534b; margin-left: 4px; }
  .add { color: #3fb950; margin-right: 5px; }
  .del { color: #f85149; }

  .cols { display: flex; gap: 24px; padding-top: 16px; }
  .left { width: 896px; }
  .item { display: flex; gap: 16px; }
  .box { width: 840px; border: 1px solid #30363d; border-radius: 6px; position: relative; flex: none; }
  .arrow { position: absolute; left: -9px; top: 11px; }
  .comment { height: 92px; border-color: #1a4175; }
  .chead { height: 37px; background: #13233a; border-bottom: 1px solid #1a4b8c; border-radius: 5px 5px 0 0; display: flex; align-items: center; justify-content: space-between; padding: 0 20px 0 16px; color: #8b949e; }
  .chead b { color: #c9d1d9; }
  .cicons { display: flex; gap: 8px; }
  .cbody { padding: 17px 16px 16px; font-style: italic; color: #8b949e; letter-spacing: -0.018em; }
  .timeline { height: 54px; border-bottom: 2px solid #30363d; display: flex; padding-left: 65px; color: #8b949e; }
  .rail { width: 16px; display: flex; flex-direction: column; align-items: center; }
  .rail i { width: 2px; height: 12px; background: #21262d; }
  .rail i:last-child { height: 24px; }
  .commit { display: flex; align-items: center; height: 20px; margin-top: 8px; padding-left: 16px; flex: 1; }
  .commit code { margin-left: 5px; padding-top: 5px; }
  .commit .sha { margin-left: auto; }
  .push { margin: 17px 0 0 56px; height: 36px; color: #8b949e; white-space: nowrap; letter-spacing: -0.022em; }
  .push code, .push b { color: #c9d1d9; font-weight: 700; }
  .push b { font-weight: 600; letter-spacing: -0.025em; }
  .mergeicon { width: 40px; height: 40px; margin-left: 1px; margin-right: -1px; padding-right: 2px; border-radius: 6px; background: #238636; color: #fff; display: flex; align-items: center; justify-content: center; }
  .mergebox { height: 215px; border-color: #238636; }
  .mrow { height: 75px; border-bottom: 1px solid #30363d; padding: 16px 0 0 15px; display: flex; gap: 10px; }
  .second { height: 74px; }
  .circ { width: 30px; height: 30px; border-radius: 50%; background: #238636; color: #fff; display: flex; align-items: center; justify-content: center; }
  .grey { background: #161b22; }
  h3 { font-size: 16px; font-weight: 600; line-height: 23px; letter-spacing: -0.032em; }
  h3.mut { color: #8b949e; }
  .mrow p { font-size: 13px; line-height: 19px; color: #8b949e; letter-spacing: -0.0235em; }
  .mrow p em { letter-spacing: -0.0235em; }
  .mfoot { height: 64px; background: #161b22; border-radius: 0 0 5px 5px; display: flex; align-items: center; padding-left: 16px; font-size: 12px; }
  .mbtn { width: 195px; height: 32px; border-radius: 6px; border: 1px solid #3c9350; background: #238636; color: #fff; display: flex; font: 600 14px/30px "Open Sans", sans-serif; margin-right: 8px; }
  .mbtn span { width: 153px; text-align: center; border-right: 1px solid #2f9143; }
  .mbtn i { flex: 1; display: flex; align-items: center; justify-content: center; }
  .form { margin-top: 16px; }
  .editor { height: 300px; background: #0d1117; }
  .ehead { height: 48px; background: #161b22; border-bottom: 1px solid #30363d; border-radius: 5px 5px 0 0; display: flex; padding: 8px 0 0 8px; color: #8b949e; }
  .wtab { width: 67px; height: 40px; border: 1px solid #30363d; border-bottom: 0; border-radius: 6px 6px 0 0; background: #0d1117; color: #c9d1d9; text-align: center; line-height: 41px; }
  .ptab { padding-left: 21px; line-height: 43px; }
  .tools { margin-left: auto; display: grid; grid-template-columns: repeat(9, 29.100px) 26px 35px 32px; height: 40px; align-items: center; margin-right: 8px; }
  .tools span { display: flex; justify-content: center; }
  .area { margin: 8px 8px 0; height: 100px; background: #010409; border: 1px solid #30363d; border-bottom: 1px dashed #30363d; border-radius: 6px 6px 0 0; padding: 9px 7px; color: #6e7681; position: relative; }
  .grip { position: absolute; right: 1px; bottom: 1px; }
  .attach { margin: 0 8px; height: 60px; background: #161b22; border: 1px solid #30363d; border-top: 0; display: flex; justify-content: space-between; padding: 5px 10px; color: #8b949e; }
  .attach span { font-size: 13px; letter-spacing: -0.019em; }
  .attach svg { margin: 5px 0; }

  aside { width: 296px; font-size: 12px; line-height: 18px; }
  .sec { height: 77px; border-bottom: 1px solid #21262d; padding-top: 17px; }
  .st { display: flex; justify-content: space-between; height: 18px; color: #8b949e; margin-bottom: 8px; }
  .st .icon { margin-top: -1px; }
  .st.low .icon { margin-top: 1px; }
  .sec p span { color: #8b949e; }
  .dev { height: 123px; }
  .none { margin-top: 10px; }
  .notif { border: 0; height: auto; }
  .notif .st { margin-bottom: 7px; }
  .unsub { justify-content: center; gap: 8px; margin-bottom: 5px; }
  .notif p { color: #8b949e; }

  .taskbar { height: 48px; display: flex; align-items: center; position: relative; background: linear-gradient(90deg, #1a1f29 0, #1c222c 340px, #13234f 385px, #122058 600px, #141a5e 720px, #12264f 800px, #141c5e 880px, #13225a 940px, #1b1e45 1010px, #1a2038 1080px, #12225c 1180px, #11205e 1290px, #1d2136 1380px, #1a202b 1450px); color: #fff; font-size: 12px; line-height: 16px; }
  .weather { display: flex; gap: 8px; align-items: center; width: 631px; padding-left: 19px; }
  .weather div, .clock { display: flex; flex-direction: column; padding-top: 2px; letter-spacing: -0.02em; }
  .soft { color: #d0d3d8; letter-spacing: -0.015em; }
  .apps { display: flex; }
  .app { width: 44px; height: 40px; display: flex; align-items: center; justify-content: center; position: relative; }
  .app.focus { background: #272f56; border: 1px solid #333a5e; border-radius: 4px; width: 40px; margin: 0 2px; }
  .running::after, .focus::after { content: ""; position: absolute; bottom: 1px; width: 6px; height: 3px; border-radius: 2px; background: #8f96ad; }
  .focus::after { width: 16px; bottom: 0; background: #4cc2ff; }
  .count { position: absolute; right: 4px; top: 5px; width: 14px; height: 14px; border-radius: 50%; background: #d0102e; font-size: 11px; line-height: 14px; text-align: center; }
  .tray { margin-left: auto; display: flex; align-items: center; padding-right: 20px; }
  .tr { width: 24px; display: flex; justify-content: center; }
  .mic { width: 32px; height: 40px; border-radius: 4px; background: #4cc2ff; display: flex; align-items: center; justify-content: center; margin-right: 4px; }
  .clock { width: 71px; text-align: right; }
  .moon { width: 24px; display: flex; justify-content: flex-end; }
</style>
